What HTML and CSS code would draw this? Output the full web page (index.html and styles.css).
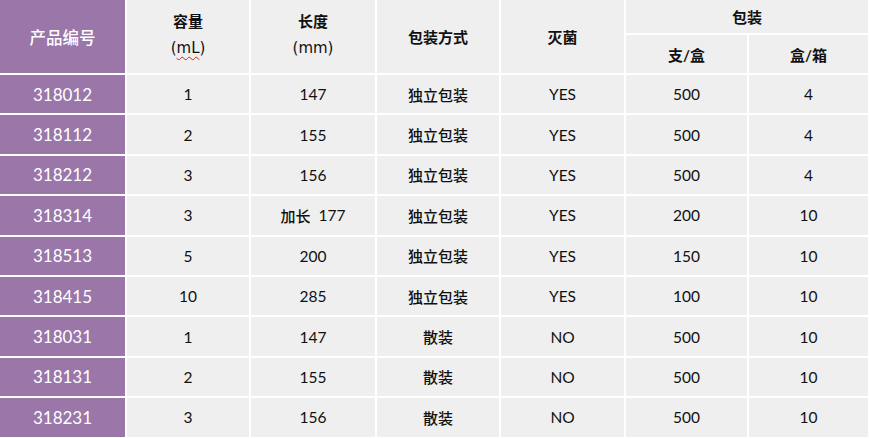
FILE: index.html
```html
<!DOCTYPE html>
<html lang="zh">
<head>
<meta charset="utf-8">
<title>产品规格</title>
<link rel="stylesheet" href="styles.css">
</head>
<body>
<div class="tbl">
  <div class="cell code head-code span2">产品编号</div>
  <div class="cell th span2 two"><span>容量</span><span class="unit">(<span class="spell">mL</span>)</span></div>
  <div class="cell th span2 two"><span>长度</span><span class="unit">(mm)</span></div>
  <div class="cell th span2">包装方式</div>
  <div class="cell th span2">灭菌</div>
  <div class="cell th colspan2">包装</div>
  <div class="cell th">支/盒</div>
  <div class="cell th">盒/箱</div>

  <div class="cell code">318012</div><div class="cell">1</div><div class="cell">147</div><div class="cell cjk">独立包装</div><div class="cell">YES</div><div class="cell">500</div><div class="cell">4</div>
  <div class="cell code">318112</div><div class="cell">2</div><div class="cell">155</div><div class="cell cjk">独立包装</div><div class="cell">YES</div><div class="cell">500</div><div class="cell">4</div>
  <div class="cell code">318212</div><div class="cell">3</div><div class="cell">156</div><div class="cell cjk">独立包装</div><div class="cell">YES</div><div class="cell">500</div><div class="cell">4</div>
  <div class="cell code">318314</div><div class="cell">3</div><div class="cell"><span class="cjk">加长</span>&nbsp;&nbsp;177</div><div class="cell cjk">独立包装</div><div class="cell">YES</div><div class="cell">200</div><div class="cell">10</div>
  <div class="cell code">318513</div><div class="cell">5</div><div class="cell">200</div><div class="cell cjk">独立包装</div><div class="cell">YES</div><div class="cell">150</div><div class="cell">10</div>
  <div class="cell code">318415</div><div class="cell">10</div><div class="cell">285</div><div class="cell cjk">独立包装</div><div class="cell">YES</div><div class="cell">100</div><div class="cell">10</div>
  <div class="cell code">318031</div><div class="cell">1</div><div class="cell">147</div><div class="cell cjk">散装</div><div class="cell">NO</div><div class="cell">500</div><div class="cell">10</div>
  <div class="cell code">318131</div><div class="cell">2</div><div class="cell">155</div><div class="cell cjk">散装</div><div class="cell">NO</div><div class="cell">500</div><div class="cell">10</div>
  <div class="cell code">318231</div><div class="cell">3</div><div class="cell">156</div><div class="cell cjk">散装</div><div class="cell">NO</div><div class="cell">500</div><div class="cell">10</div>
</div>
</body>
</html>
```

FILE: styles.css
```css
html, body {
  margin: 0;
  padding: 0;
  background: #ffffff;
  overflow: hidden;
}

.tbl {
  display: grid;
  grid-template-columns: 125px 122px 124px 122px 123px 121px 119px;
  grid-template-rows: 33px 38px repeat(9, 38.4px);
  gap: 2px;
  width: 868px;
  padding-right: 1px;
  background: #ffffff;
  font-family: "Lato", "Noto Sans CJK SC", sans-serif;
  font-size: 15.5px;
  color: #111111;
}

.cell {
  background: #efefef;
  display: flex;
  align-items: center;
  justify-content: center;
  white-space: nowrap;
}

.cjk {
  font-family: "Noto Sans CJK SC", sans-serif;
  font-weight: 500;
  font-size: 15px;
}

.th {
  font-family: "Lato", "Noto Sans CJK SC", sans-serif;
  font-weight: 700;
  font-size: 15px;
}

.span2 {
  grid-row: span 2;
}

.colspan2 {
  grid-column: span 2;
}

.two {
  flex-direction: column;
  line-height: 27px;
  padding-bottom: 4px;
  box-sizing: border-box;
}

.unit {
  font-family: "DejaVu Sans", sans-serif;
  font-weight: 400;
  font-size: 15px;
}

.spell {
  text-decoration: underline wavy #e02020;
  text-decoration-thickness: 1px;
  text-underline-offset: 3px;
}

.code {
  background: #9a77a8;
  color: #ffffff;
  font-size: 17px;
}

.head-code {
  font-family: "Noto Sans CJK SC", sans-serif;
  font-weight: 500;
  font-size: 16.5px;
}
```
